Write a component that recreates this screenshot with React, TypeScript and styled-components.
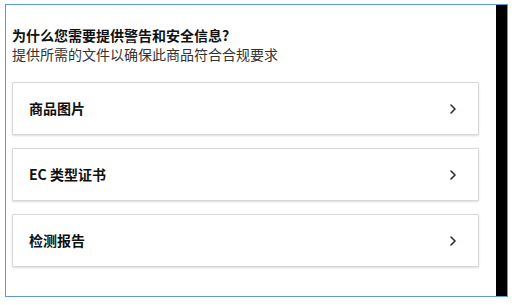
import styled, { createGlobalStyle } from "styled-components";

const GlobalStyle = createGlobalStyle`
  html, body {
    margin: 0;
    padding: 0;
    background: #ffffff;
  }
  body {
    font-family: "Noto Sans CJK SC", "Noto Sans", sans-serif;
    color: #0f1111;
  }
`;

const items = ["商品图片", "EC 类型证书", "检测报告"];

export default function App() {
  return (
    <>
      <GlobalStyle />
      <Frame>
        <Content>
          <Header>
            <Title>为什么您需要提供警告和安全信息?</Title>
            <Subtitle>提供所需的文件以确保此商品符合合规要求</Subtitle>
          </Header>
          <List>
            {items.map((label) => (
              <Card key={label} type="button">
                <CardLabel>{label}</CardLabel>
                <Chevron viewBox="0 0 6 10" aria-hidden="true">
                  <path d="M1 1l4 4-4 4" />
                </Chevron>
              </Card>
            ))}
          </List>
        </Content>
        <SideBar />
      </Frame>
    </>
  );
}

const Frame = styled.div`
  box-sizing: border-box;
  display: flex;
  width: 503px;
  height: 293px;
  margin: 4px 0 0 5px;
  border: 1px solid #5b9bd5;
`;

const Content = styled.div`
  flex: 1;
  display: flex;
  flex-direction: column;
  padding: 21px 17px 0 6px;
`;

const Header = styled.div`
  display: flex;
  flex-direction: column;
  margin-bottom: 18px;
`;

const Title = styled.h2`
  margin: 0;
  font-size: 14px;
  line-height: 19px;
  font-weight: 700;
  color: #0f1111;
`;

const Subtitle = styled.p`
  margin: 0;
  font-size: 14px;
  line-height: 19px;
  font-weight: 400;
  color: #333333;
`;

const List = styled.div`
  display: flex;
  flex-direction: column;
  gap: 13px;
`;

const Card = styled.button`
  box-sizing: border-box;
  display: flex;
  align-items: center;
  justify-content: space-between;
  height: 53px;
  width: 100%;
  padding: 0 22px 0 16px;
  background: #ffffff;
  border: 1px solid #d5d9d9;
  border-radius: 1px;
  box-shadow: 0 1px 2px rgba(15, 17, 17, 0.15);
  font-family: inherit;
  cursor: pointer;
  text-align: left;
`;

const CardLabel = styled.span`
  font-size: 14px;
  line-height: 19px;
  font-weight: 700;
  color: #0f1111;
`;

const Chevron = styled.svg`
  width: 6px;
  height: 10px;
  fill: none;
  stroke: #232f3e;
  stroke-width: 1.6;
  stroke-linecap: round;
  stroke-linejoin: round;
`;

const SideBar = styled.div`
  width: 11px;
  background: #000000;
`;
